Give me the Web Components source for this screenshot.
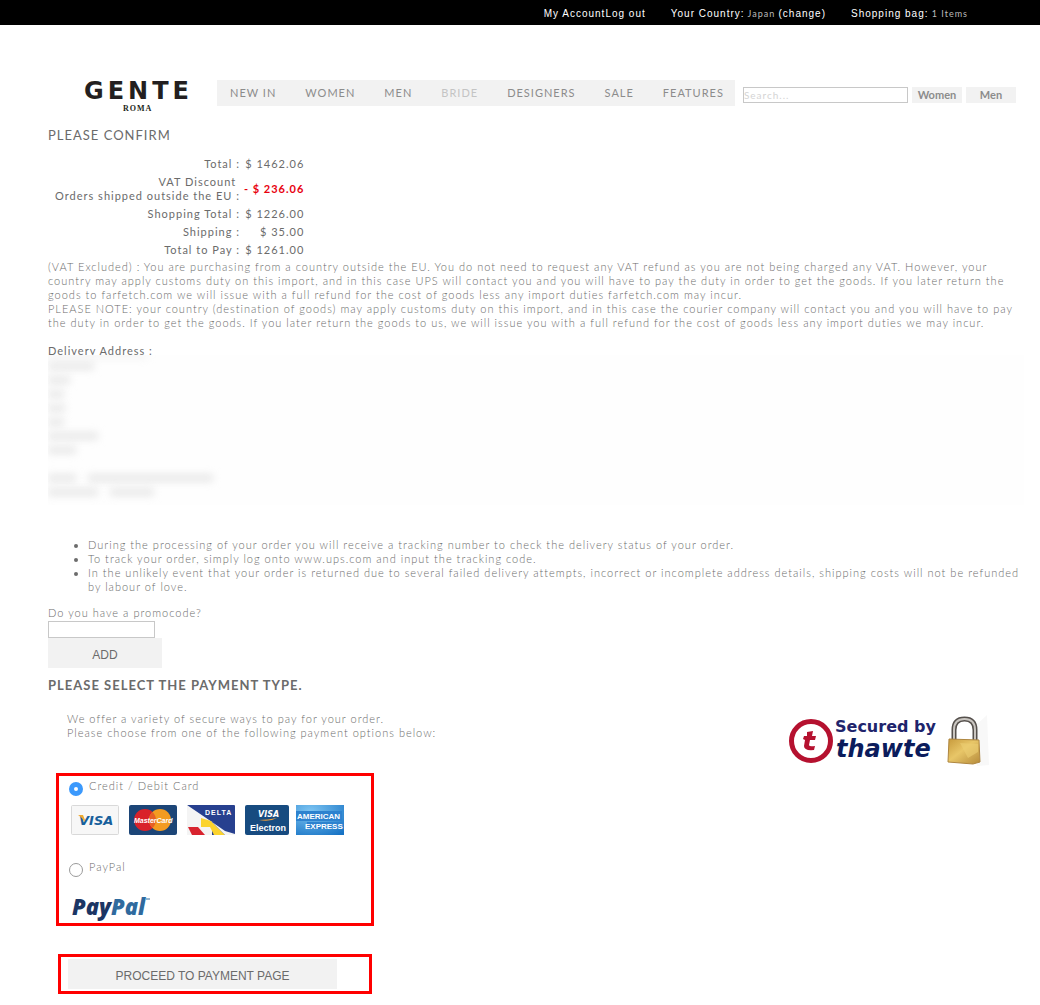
<!DOCTYPE html>
<html lang="en">
<head>
<meta charset="utf-8">
<title>Gente Roma - Please confirm</title>
<style>
  body {
    margin: 0;
    background: #fff;
    color: #6c6c6c;
    font: 300 11px/14px Lato, "Liberation Sans", sans-serif;
    letter-spacing: 1px;
    --strong: #6b6b6b;
    --panel: #f2f2f2;
    --line: #c8c8c8;
  }
  main {
    padding: 0 16px 8px 48px;
  }
</style>
</head>
<body>
<top-bar></top-bar>
<site-header></site-header>
<main>
  <section-title>PLEASE CONFIRM</section-title>
  <order-summary></order-summary>
  <customs-note></customs-note>
  <delivery-address></delivery-address>
  <delivery-info></delivery-info>
  <promo-form></promo-form>
  <section-title class="payment">PLEASE SELECT THE PAYMENT TYPE.</section-title>
  <payment-intro></payment-intro>
  <payment-form></payment-form>
</main>

<script>
"use strict";

function define(name, markup) {
  customElements.define(name, class extends HTMLElement {
    constructor() {
      super();
      this.attachShadow({ mode: "open" }).innerHTML = markup;
    }
  });
}

define("top-bar", `
  <style>
    :host {
      display: flex;
      justify-content: flex-end;
      gap: 25px;
      height: 25px;
      padding-right: 72px;
      background: #000;
      color: #bbb;
      font-size: 9px;
      font-weight: 400;
      line-height: 27px;
    }
    a, b {
      color: #fff;
      font-family: "Liberation Sans", sans-serif;
      font-size: 10px;
      font-weight: 400;
      text-decoration: none;
    }
  </style>
  <span><a href="#account">My Account</a><a href="#logout">Log out</a></span>
  <span><b>Your Country:</b> Japan <a href="#country">(change)</a></span>
  <span><b>Shopping bag:</b> 1 Items</span>
`);

define("site-header", `
  <style>
    :host {
      display: flex;
      align-items: flex-start;
      padding: 55px 24px 0 85px;
    }
    .logo {
      width: 132px;
      color: #231f20;
      text-decoration: none;
    }
    .logo svg { display: block; overflow: visible; }
    nav {
      display: flex;
      gap: 29px;
      height: 26px;
      padding: 0 11px 0 13px;
      background: var(--panel);
      font-weight: 400;
      line-height: 26px;
      white-space: nowrap;
    }
    nav a {
      color: #8c8c8c;
      text-decoration: none;
    }
    nav a.off { color: #c4c4c4; }
    form {
      display: flex;
      flex: 1;
      gap: 4px;
      margin: 7px 0 0 8px;
    }
    input {
      box-sizing: border-box;
      flex: 1;
      min-width: 0;
      height: 16px;
      padding: 0;
      border: 1px solid var(--line);
      border-radius: 0;
      font: inherit;
      font-size: 10px;
      font-weight: 400;
      letter-spacing: inherit;
    }
    input::placeholder { color: #d4d4d4; }
    button {
      width: 50px;
      height: 16px;
      padding: 0;
      border: 0;
      background: var(--panel);
      color: #8c8c8c;
      font: 700 11px/16px Lato, sans-serif;
    }
  </style>
  <a class="logo" href="#home" aria-label="Gente Roma">
    <svg width="124" height="34" viewBox="0 0 124 34" fill="currentColor">
      <text x="-1" y="19" font-family="DejaVu Sans" font-weight="700" font-size="24" letter-spacing="4">GENTE</text>
      <text x="38" y="31" font-family="Liberation Serif" font-weight="700" font-size="8" letter-spacing="1">ROMA</text>
    </svg>
  </a>
  <nav>
    <a href="#new">NEW IN</a>
    <a href="#women">WOMEN</a>
    <a href="#men">MEN</a>
    <a class="off" href="#bride">BRIDE</a>
    <a href="#designers">DESIGNERS</a>
    <a href="#sale">SALE</a>
    <a href="#features">FEATURES</a>
  </nav>
  <form>
    <input type="search" placeholder="Search..." aria-label="Search">
    <button type="button">Women</button>
    <button type="button">Men</button>
  </form>
`);

define("section-title", `
  <style>
    :host {
      display: block;
      padding: 12px 0 10px;
      color: var(--strong);
    }
    :host(.payment) { padding: 8px 0 18px; }
    h2 {
      margin: 0;
      font-size: 13px;
      font-weight: 400;
      line-height: 18px;
    }
    :host(.payment) h2 { font-weight: 700; }
  </style>
  <h2><slot></slot></h2>
`);

define("order-summary", `
  <style>
    :host { display: block; color: var(--strong); }
    table { border-spacing: 2px; }
    th, td {
      padding: 1px;
      font-weight: 400;
      text-align: right;
      white-space: nowrap;
    }
    th { min-width: 189px; }
    td { min-width: 59px; }
    .discount { color: #e8000f; font-weight: 700; }
  </style>
  <table>
    <tr><th>Total :</th><td>$ 1462.06</td></tr>
    <tr><th>VAT Discount&nbsp;<br>Orders shipped outside the EU :</th><td class="discount">- $ 236.06</td></tr>
    <tr><th>Shopping Total :</th><td>$ 1226.00</td></tr>
    <tr><th>Shipping :</th><td>$ 35.00</td></tr>
    <tr><th>Total to Pay :</th><td>$ 1261.00</td></tr>
  </table>
`);

define("customs-note", `
  <style>
    :host { display: block; }
    p { margin: 0; }
  </style>
  <p>(VAT Excluded) : You are purchasing from a country outside the EU. You do not need to request any VAT refund as you are not being charged any VAT. However, your
    <br>country may apply customs duty on this import, and in this case UPS will contact you and you will have to pay the duty in order to get the goods. If you later return the
    <br>goods to farfetch.com we will issue with a full refund for the cost of goods less any import duties farfetch.com may incur.</p>
  <p>PLEASE NOTE: your country (destination of goods) may apply customs duty on this import, and in this case the courier company will contact you and you will have to pay
    <br>the duty in order to get the goods. If you later return the goods to us, we will issue you with a full refund for the cost of goods less any import duties we may incur.</p>
`);

define("delivery-address", `
  <style>
    :host { display: block; margin-top: 14px; }
    h3 {
      margin: 0;
      color: var(--strong);
      font-size: 11px;
      font-weight: 400;
    }
    /* the private lines are only smudges, there is no text under them */
    .private {
      position: relative;
      display: grid;
      grid-auto-rows: 14px;
      align-items: center;
      justify-items: start;
      height: 150px;
      margin-top: -3px;
      background: #fefefe;
      overflow: hidden;
    }
    i {
      height: 6px;
      margin-top: 7px;
      background: #e2e2e2;
      filter: blur(4px);
    }
    i:first-child { height: 2px; margin-top: 0; align-self: start; }
  </style>
  <h3>Delivery Address :</h3>
  <div class="private" aria-hidden="true"></div>
`);

define("delivery-info", `
  <style>
    :host { display: block; margin-top: 33px; }
    ul { margin: 0; padding-left: 40px; }
  </style>
  <ul>
    <li>During the processing of your order you will receive a tracking number to check the delivery status of your order.</li>
    <li>To track your order, simply log onto www.ups.com and input the tracking code.</li>
    <li>In the unlikely event that your order is returned due to several failed delivery attempts, incorrect or incomplete address details, shipping costs will not be refunded
      <br>by labour of love.</li>
  </ul>
`);

define("promo-form", `
  <style>
    :host { display: block; margin-top: 12px; }
    label, input, button { display: block; }
    input {
      box-sizing: border-box;
      width: 107px;
      height: 17px;
      margin-top: 1px;
      border: 1px solid var(--line);
      font: inherit;
    }
    button {
      width: 114px;
      height: 30px;
      padding: 4px 0 0;
      border: 0;
      background: var(--panel);
      color: var(--strong);
      font: 12px "Liberation Sans", sans-serif;
    }
  </style>
  <label for="code">Do you have a promocode?</label>
  <input id="code" type="text">
  <button type="button">ADD</button>
`);

define("payment-intro", `
  <style>
    :host {
      display: flex;
      justify-content: space-between;
      height: 61px;
      padding: 0 35px 0 19px;
    }
    p { margin: 0; }
    svg { display: block; }
  </style>
  <p>We offer a variety of secure ways to pay for your order.<br>Please choose from one of the following payment options below:</p>
  <svg width="204" height="56" viewBox="785 711 204 56" role="img" aria-label="Secured by thawte">
    <defs>
      <linearGradient id="brass" x1="0" y1="0" x2="1" y2="1">
        <stop offset="0" stop-color="#c79a3c"/><stop offset=".45" stop-color="#e8c668"/><stop offset="1" stop-color="#b58a3a"/>
      </linearGradient>
    </defs>
    <circle cx="811" cy="740" r="19.500" fill="#fff" stroke="#b5112f" stroke-width="5"/>
    <path d="M807 731l6-1-1 5h4l-1 4h-5l-1 5q0 2 6 1l-1 4q-10 1-10-4l1-6-2-1 1-3h3z" fill="#b5112f"/>
    <text x="835" y="731" font-family="DejaVu Sans" font-weight="700" font-size="16" letter-spacing="0" fill="#20246c">Secured by</text>
    <text x="836" y="756" font-family="DejaVu Sans" font-weight="700" font-style="italic" font-size="24" letter-spacing="0" fill="#0b1c5c">thawte</text>
    <path d="M974 726l13-12 2 50-12 1z" fill="#f8f8f8"/>
    <path d="M954 741v-12q0-11 10.500-11t10.500 11v12" fill="none" stroke="#55504c" stroke-width="5"/>
    <path d="M954 741v-12q0-11 10.500-11t10.500 11v12" fill="none" stroke="#c9c5c0" stroke-width="2"/>
    <path d="M949 738l30 1 1 22-7 2-25-2z" fill="url(#brass)" stroke="#ae8640" stroke-width="1"/>
    <path d="M960 742l18 1v8l-10 6z" fill="#edce73" opacity=".6"/>
  </svg>
`);

define("card-logos", `
  <style>
    :host { display: flex; gap: 10px; }
    svg { display: block; }
    text { letter-spacing: 0; font-family: "Liberation Sans", sans-serif; font-weight: 700; }
    .visa { font-family: "DejaVu Sans", sans-serif; font-style: italic; }
    .amex { margin-left: -3px; }
  </style>
  <svg width="48" height="30" role="img" aria-label="Visa">
    <rect x=".5" y=".5" width="47" height="29" rx="1" fill="#f7f7f7" stroke="#d9d9d9"/>
    <text class="visa" x="8" y="20" font-size="13" fill="#17609c">VISA</text>
    <path d="M7 10h5l2 5-1 2q-1-4-6-7z" fill="#f0ab2e"/>
  </svg>
  <svg width="48" height="30" role="img" aria-label="MasterCard">
    <rect width="48" height="30" rx="2" fill="#1c4577"/>
    <circle cx="16" cy="15" r="11" fill="#d9222a"/>
    <circle cx="31" cy="15" r="11" fill="#f39b21"/>
    <path d="M23.500 7a11 11 0 0 1 0 16a11 11 0 0 1 0-16" fill="#e65f25"/>
    <text x="5" y="18" font-size="7" font-style="italic" fill="#fff">MasterCard</text>
  </svg>
  <svg width="48" height="30" role="img" aria-label="Delta">
    <rect width="48" height="30" rx="1" fill="#27408f"/>
    <path d="M0 0l25 17v13H0z" fill="#f4f4f4"/>
    <path d="M14 13l10 3 14 14H27l-4-8h-9z" fill="#fbd32e"/>
    <path d="M1 22h10l7 8H5z" fill="#d8232e"/>
    <path d="M48 11L25 17l13 13h10z" fill="#f4f4f4"/>
    <path d="M48 2L25 17l13 9 10 3z" fill="#27408f"/>
    <text x="18" y="10" font-size="7" fill="#fff" style="letter-spacing:1px">DELTA</text>
  </svg>
  <svg width="44" height="30" role="img" aria-label="Visa Electron">
    <rect width="44" height="30" rx="2" fill="#174b80"/>
    <text class="visa" x="13" y="12" font-size="8" fill="#fff">VISA</text>
    <path d="M14 15q9 0 18-2-7 4-18 2z" fill="#f3a13a"/>
    <text x="5" y="26" font-size="9" fill="#fff">Electron</text>
  </svg>
  <svg class="amex" width="48" height="30" role="img" aria-label="American Express">
    <defs><radialGradient id="sky" cx=".3" cy=".2" r="1"><stop offset="0" stop-color="#7cc4f2"/><stop offset="1" stop-color="#1672c4"/></radialGradient></defs>
    <rect width="48" height="30" fill="url(#sky)"/>
    <path d="M0 6h46v10H0zM11 17h37v7H11z" fill="#2d82cf"/>
    <text x="1" y="14" font-size="8" fill="#fff">AMERICAN</text>
    <text x="9" y="24" font-size="8" fill="#fff">EXPRESS</text>
  </svg>
`);

define("payment-form", `
  <style>
    :host { display: block; }
    fieldset {
      box-sizing: border-box;
      width: 318px;
      height: 153px;
      margin: 0 0 0 8px;
      padding: 2px 0 0 10px;
      border: 3px solid #f00;
    }
    .option {
      display: flex;
      gap: 6px;
      line-height: 15px;
    }
    input {
      appearance: none;
      box-sizing: border-box;
      width: 14px;
      height: 14px;
      margin: 4px 0 0;
      border: 1px solid #9a9a9a;
      border-radius: 50%;
      background: #fff;
    }
    input:checked { border: 5px solid #3b99fc; }
    card-logos { margin: 9px 0 0 2px; }
    .second { margin-top: 24px; }
    .paypal { display: block; margin: 12px 0 0 3px; }
    .submit {
      box-sizing: border-box;
      width: 314px;
      height: 40px;
      margin: 28px 0 0 10px;
      padding: 2px 0 0 7px;
      border: 3px solid #f00;
    }
    button {
      display: block;
      width: 269px;
      height: 30px;
      padding: 4px 0 0;
      border: 0;
      background: var(--panel);
      color: var(--strong);
      font: 12px "Liberation Sans", sans-serif;
    }
  </style>
  <form>
    <fieldset aria-label="Payment type">
      <div class="option">
        <input type="radio" id="card" name="pay" checked>
        <label for="card">Credit / Debit Card</label>
      </div>
      <card-logos></card-logos>
      <div class="option second">
        <input type="radio" id="paypal" name="pay">
        <label for="paypal">PayPal</label>
      </div>
      <svg class="paypal" width="82" height="34" role="img" aria-label="PayPal">
        <text x="0" y="26" font-family="Open Sans" font-weight="800" font-style="italic" font-size="22" letter-spacing="0"><tspan fill="#1b3564">Pay</tspan><tspan fill="#2f6a9e">Pal</tspan></text>
        <path d="M74 10h4" stroke="#2f6a9e"/>
      </svg>
    </fieldset>
    <div class="submit">
      <button type="button">PROCEED TO PAYMENT PAGE</button>
    </div>
  </form>
`);

// left indent, width and row of every smudge in the address block
const smudges = [[0, 100, 1], [0, 46, 1], [0, 22, 2], [0, 16, 3], [0, 17, 4], [0, 16, 5], [0, 50, 6], [0, 28, 7], [0, 28, 9], [40, 125, 9], [0, 50, 10], [62, 44, 10]];
const area = document.querySelector("delivery-address").shadowRoot.querySelector(".private");
for (const [left, width, row] of smudges) {
  const bar = document.createElement("i");
  bar.style.cssText = `grid-area: ${row} / 1; margin-left: ${left}px; width: ${width}px`;
  area.append(bar);
}
</script>
</body>
</html>
